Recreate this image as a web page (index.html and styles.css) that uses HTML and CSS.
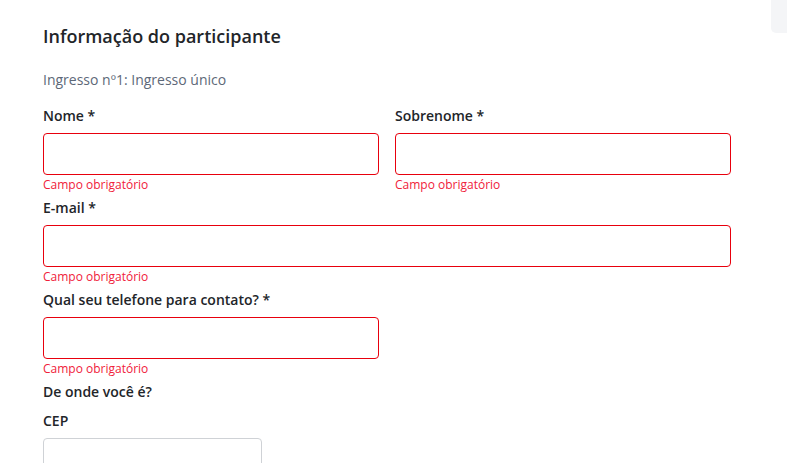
FILE: index.html
```html
<!DOCTYPE html>
<html lang="pt-BR">
<head>
<meta charset="utf-8">
<title>Informação do participante</title>
<link rel="stylesheet" href="styles.css">
</head>
<body>
<div class="corner"></div>
<main class="page">
  <h2 class="title">Informação do participante</h2>
  <p class="subtitle">Ingresso nº1: Ingresso único</p>

  <div class="row two">
    <div class="field">
      <label class="label">Nome *</label>
      <input class="input invalid" type="text">
      <div class="error">Campo obrigatório</div>
    </div>
    <div class="field">
      <label class="label">Sobrenome *</label>
      <input class="input invalid" type="text">
      <div class="error">Campo obrigatório</div>
    </div>
  </div>

  <div class="field">
    <label class="label">E-mail *</label>
    <input class="input invalid" type="text">
    <div class="error">Campo obrigatório</div>
  </div>

  <div class="row two">
    <div class="field">
      <label class="label">Qual seu telefone para contato? *</label>
      <input class="input invalid" type="text">
      <div class="error">Campo obrigatório</div>
    </div>
  </div>

  <h3 class="section">De onde você é?</h3>

  <div class="row three">
    <div class="field">
      <label class="label">CEP</label>
      <input class="input" type="text">
    </div>
  </div>
</main>
</body>
</html>
```

FILE: styles.css
```css
html, body {
  margin: 0;
  padding: 0;
  background: #ffffff;
  overflow: hidden;
}

body {
  font-family: "Open Sans", "Noto Sans", sans-serif;
  color: #222529;
}

.corner {
  position: absolute;
  top: 0;
  right: 0;
  width: 16px;
  height: 33px;
  background: #f4f5f7;
  border-bottom-left-radius: 5px;
}

.page {
  width: 688px;
  padding: 23px 0 0 43px;
}

.title {
  margin: 0;
  font-size: 18px;
  line-height: 27px;
  font-weight: 600;
  color: #222529;
}

.subtitle {
  margin: 19px 0 15px;
  font-size: 14px;
  line-height: 21px;
  color: #5d6878;
}

.row {
  display: grid;
  column-gap: 16px;
}

.row.two {
  grid-template-columns: 1fr 1fr;
}

.row.three {
  grid-template-columns: 1fr 1fr 1fr;
}

.field {
  display: flex;
  flex-direction: column;
  margin-bottom: 4px;
}

.label {
  display: block;
  font-size: 14px;
  line-height: 20px;
  padding-top: 1px;
  font-weight: 600;
  color: #222529;
  margin-bottom: 7px;
  white-space: nowrap;
}

.input {
  box-sizing: border-box;
  width: 100%;
  height: 42px;
  margin: 0;
  border: 1px solid #cfd2d6;
  border-radius: 4px;
  background: #ffffff;
  font-family: inherit;
  font-size: 14px;
  padding: 0 12px;
  outline: none;
}

.input.invalid {
  border-color: #e8000d;
}

.error {
  font-size: 12px;
  line-height: 17px;
  padding-top: 1px;
  color: #f0213a;
}

.section {
  margin: 0 0 8px;
  padding-top: 1px;
  font-size: 14px;
  line-height: 20px;
  font-weight: 600;
  color: #222529;
}
```
